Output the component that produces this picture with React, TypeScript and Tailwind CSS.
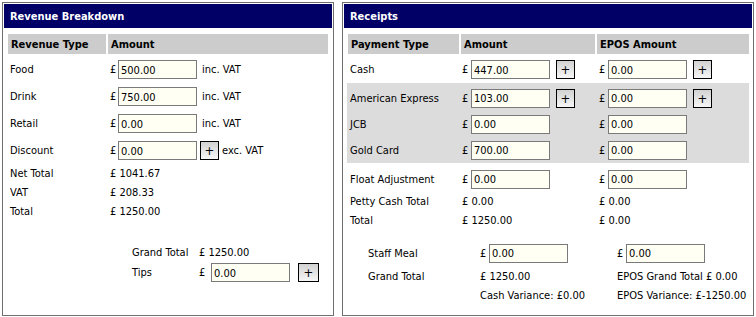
const font = { fontFamily: 'Tahoma, "DejaVu Sans Condensed", "DejaVu Sans", sans-serif' };

function Field({ value, w = "w-[79px]" }: { value: string; w?: string }) {
  return (
    <input
      readOnly
      value={value}
      className={`${w} h-[19px] border border-[#7a7a7a] bg-[#fffff4] px-[2px] pt-[1px] text-[11px] text-black outline-none`}
      style={font}
    />
  );
}

function Plus({ className = "" }: { className?: string }) {
  return (
    <button
      className={`flex h-[19px] w-[19px] items-center justify-center border border-black bg-gradient-to-b from-[#d2d2d2] to-[#f6f6f6] text-[13px] leading-none text-black ${className}`}
    >
      +
    </button>
  );
}

function Panel({ title, className, children }: { title: string; className: string; children: React.ReactNode }) {
  return (
    <div className={`border border-[#6f6f6f] bg-white p-[1px] ${className}`}>
      <div className="flex h-[24px] items-center bg-[#000066] pl-[6px] pt-[2px] text-[11px] font-bold text-white">{title}</div>
      <div className="px-[4px]">{children}</div>
    </div>
  );
}

function RevenueBreakdown() {
  const rows = [
    { label: "Food", value: "500.00", note: "inc. VAT" },
    { label: "Drink", value: "750.00", note: "inc. VAT" },
    { label: "Retail", value: "0.00", note: "inc. VAT" },
  ];
  const totals = [
    ["Net Total", "£ 1041.67"],
    ["VAT", "£ 208.33"],
    ["Total", "£ 1250.00"],
  ];
  return (
    <Panel title="Revenue Breakdown" className="h-[314px] w-[332px]">
      <div className="mt-[6px] grid grid-cols-[98px_220px] gap-x-[2px] font-bold">
        <div className="flex h-[20px] items-center bg-[#cccccc] pl-[3px] pt-[2px]">Revenue Type</div>
        <div className="flex h-[20px] items-center bg-[#cccccc] pl-[3px] pt-[2px]">Amount</div>
      </div>
      <div className="mt-[2px]">
        {rows.map((r) => (
          <div key={r.label} className="grid h-[27px] grid-cols-[98px_220px] items-center gap-x-[2px]">
            <div className="pl-[2px] pt-[2px]">{r.label}</div>
            <div className="flex items-center pl-[2px]">
              <span className="w-[8px] pt-[2px]">£</span>
              <Field value={r.value} />
              <span className="ml-[5px] pt-[2px]">{r.note}</span>
            </div>
          </div>
        ))}
        <div className="grid h-[27px] grid-cols-[98px_220px] items-center gap-x-[2px]">
          <div className="pl-[2px] pt-[2px]">Discount</div>
          <div className="flex items-center pl-[2px]">
            <span className="w-[8px] pt-[2px]">£</span>
            <Field value="0.00" />
            <Plus className="ml-[3px]" />
            <span className="ml-[3px] pt-[2px]">exc. VAT</span>
          </div>
        </div>
        {totals.map(([l, v]) => (
          <div key={l} className="grid h-[19px] grid-cols-[98px_220px] items-center gap-x-[2px]">
            <div className="pl-[2px] pt-[2px]">{l}</div>
            <div className="pl-[2px] pt-[2px]">{v}</div>
          </div>
        ))}
      </div>
      <div className="ml-[124px] mt-[22px]">
        <div className="grid h-[19px] grid-cols-[67px_1fr] items-center">
          <div className="pt-[2px]">Grand Total</div>
          <div className="pt-[2px]">£ 1250.00</div>
        </div>
        <div className="grid h-[21px] grid-cols-[67px_1fr] items-center">
          <div className="pt-[2px]">Tips</div>
          <div className="flex items-center">
            <span className="w-[12px] pt-[2px]">£</span>
            <Field value="0.00" />
            <Plus className="ml-[8px] w-[21px]" />
          </div>
        </div>
      </div>
    </Panel>
  );
}

function MoneyCell({ value, plus, pl }: { value: string; plus?: boolean; pl: string }) {
  return (
    <div className={`flex items-center ${pl}`}>
      <span className="w-[9px] pt-[2px]">£</span>
      <Field value={value} />
      {plus && <Plus className="ml-[6px]" />}
    </div>
  );
}

function Receipts() {
  const cards = [
    { label: "American Express", amount: "103.00", epos: "0.00", plus: true },
    { label: "JCB", amount: "0.00", epos: "0.00", plus: false },
    { label: "Gold Card", amount: "700.00", epos: "0.00", plus: false },
  ];
  const cols = "grid grid-cols-[111px_134px_152px] gap-x-[2px] items-center";
  return (
    <Panel title="Receipts" className="h-[314px] w-[412px]">
      <div className={`mt-[6px] font-bold ${cols}`}>
        <div className="flex h-[20px] items-center bg-[#cccccc] pl-[3px] pt-[2px]">Payment Type</div>
        <div className="flex h-[20px] items-center bg-[#cccccc] pl-[3px] pt-[2px]">Amount</div>
        <div className="flex h-[20px] items-center bg-[#cccccc] pl-[3px] pt-[2px]">EPOS Amount</div>
      </div>
      <div className={`mt-[2px] h-[27px] ${cols}`}>
        <div className="pl-[2px] pt-[2px]">Cash</div>
        <MoneyCell value="447.00" plus pl="pl-[1px]" />
        <MoneyCell value="0.00" plus pl="pl-[2px]" />
      </div>
      <div className="-mx-[1px] bg-[#dcdcdc] px-[1px] pt-[2px]">
        {cards.map((c) => (
          <div key={c.label} className={`h-[26px] ${cols}`}>
            <div className="pl-[2px] pt-[2px]">{c.label}</div>
            <MoneyCell value={c.amount} plus={c.plus} pl="pl-[1px]" />
            <MoneyCell value={c.epos} plus={c.plus} pl="pl-[2px]" />
          </div>
        ))}
      </div>
      <div className={`mt-[3px] h-[26px] ${cols}`}>
        <div className="pl-[2px] pt-[2px]">Float Adjustment</div>
        <MoneyCell value="0.00" pl="pl-[1px]" />
        <MoneyCell value="0.00" pl="pl-[2px]" />
      </div>
      <div className={`h-[19px] ${cols}`}>
        <div className="pl-[2px] pt-[2px]">Petty Cash Total</div>
        <div className="pl-[1px] pt-[2px]">£ 0.00</div>
        <div className="pl-[2px] pt-[2px]">£ 0.00</div>
      </div>
      <div className={`h-[19px] ${cols}`}>
        <div className="pl-[2px] pt-[2px]">Total</div>
        <div className="pl-[1px] pt-[2px]">£ 1250.00</div>
        <div className="pl-[2px] pt-[2px]">£ 0.00</div>
      </div>
      <div className="ml-[20px] mt-[13px]">
        <div className="grid h-[20px] grid-cols-[112px_137px_1fr] items-center">
          <div className="pt-[2px]">Staff Meal</div>
          <MoneyCell value="0.00" pl="" />
          <MoneyCell value="0.00" pl="" />
        </div>
        <div className="mt-[3px] grid h-[20px] grid-cols-[112px_137px_1fr] items-center">
          <div className="pt-[2px]">Grand Total</div>
          <div className="pt-[2px]">£ 1250.00</div>
          <div className="pt-[2px]">EPOS Grand Total £ 0.00</div>
        </div>
        <div className="grid h-[19px] grid-cols-[112px_137px_1fr] items-center">
          <div />
          <div className="pt-[2px]">Cash Variance: £0.00</div>
          <div className="pt-[2px]">EPOS Variance: £-1250.00</div>
        </div>
      </div>
    </Panel>
  );
}

export default function App() {
  return (
    <div className="flex h-[317px] w-[756px] gap-[8px] bg-white pl-[2px] pt-[2px] text-[11px] text-black" style={font}>
      <RevenueBreakdown />
      <Receipts />
    </div>
  );
}
